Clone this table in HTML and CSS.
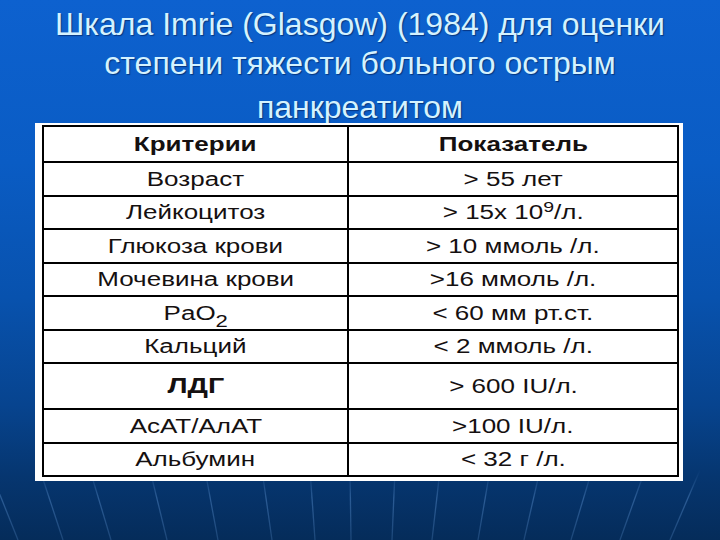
FILE: index.html
```html
<!DOCTYPE html>
<html lang="ru">
<head>
<meta charset="utf-8">
<title>Шкала Imrie</title>
<link rel="stylesheet" href="styles.css">
</head>
<body>
<div class="slide">
  <svg class="rays" width="720" height="540" viewBox="0 0 720 540" aria-hidden="true">
    <defs>
      <linearGradient id="rayfade" x1="0" y1="470" x2="0" y2="540" gradientUnits="userSpaceOnUse">
        <stop offset="0" stop-color="#6fa6e6" stop-opacity="0"/>
        <stop offset="0.4" stop-color="#6fa6e6" stop-opacity="0.35"/>
        <stop offset="1" stop-color="#6fa6e6" stop-opacity="0.22"/>
      </linearGradient>
    </defs>
    <g stroke="url(#rayfade)" stroke-width="1.3" fill="none">
      <line x1="-10" y1="470" x2="18" y2="540"/>
      <line x1="40" y1="470" x2="63" y2="540"/>
      <line x1="90" y1="470" x2="111" y2="540"/>
      <line x1="150" y1="470" x2="167" y2="540"/>
      <line x1="205" y1="470" x2="218" y2="540"/>
      <line x1="262" y1="470" x2="272" y2="540"/>
      <line x1="310" y1="470" x2="315" y2="540"/>
      <line x1="350" y1="470" x2="351" y2="540"/>
      <line x1="395" y1="470" x2="392" y2="540"/>
      <line x1="440" y1="470" x2="432" y2="540"/>
      <line x1="490" y1="470" x2="478" y2="540"/>
      <line x1="540" y1="470" x2="524" y2="540"/>
      <line x1="592" y1="470" x2="571" y2="540"/>
      <line x1="645" y1="470" x2="620" y2="540"/>
      <line x1="700" y1="470" x2="670" y2="540"/>
    </g>
  </svg>
  <h1 class="title">
    <span class="tline">Шкала Imrie (Glasgow) (1984) для оценки</span>
    <span class="tline">степени тяжести больного острым</span>
    <span class="tline last">панкреатитом</span>
  </h1>
  <div class="frame">
    <table class="grid">
      <colgroup>
        <col class="c1">
        <col class="c2">
      </colgroup>
      <tr class="head"><th><span class="cell">Критерии</span></th><th><span class="cell">Показатель</span></th></tr>
      <tr><td><span class="cell">Возраст</span></td><td><span class="cell">&gt; 55 лет</span></td></tr>
      <tr><td><span class="cell">Лейкоцитоз</span></td><td><span class="cell">&gt; 15х 10<sup>9</sup>/л.</span></td></tr>
      <tr><td><span class="cell">Глюкоза крови</span></td><td><span class="cell">&gt; 10 ммоль /л.</span></td></tr>
      <tr><td><span class="cell">Мочевина крови</span></td><td><span class="cell">&gt;16 ммоль /л.</span></td></tr>
      <tr><td><span class="cell">PaO<sub>2</sub></span></td><td><span class="cell">&lt; 60 мм рт.ст.</span></td></tr>
      <tr><td><span class="cell">Кальций</span></td><td><span class="cell">&lt; 2 ммоль /л.</span></td></tr>
      <tr class="tall"><td><span class="cell strong">ЛДГ</span></td><td><span class="cell">&gt; 600 IU/л.</span></td></tr>
      <tr><td><span class="cell">АсАТ/АлАТ</span></td><td><span class="cell">&gt;100 IU/л.</span></td></tr>
      <tr><td><span class="cell">Альбумин</span></td><td><span class="cell">&lt; 32 г /л.</span></td></tr>
    </table>
  </div>
</div>
</body>
</html>
```

FILE: styles.css
```css
html, body {
  margin: 0;
  padding: 0;
}
body {
  width: 720px;
  height: 540px;
  overflow: hidden;
  font-family: "Liberation Sans", Arial, sans-serif;
}
.slide {
  position: relative;
  width: 720px;
  height: 540px;
  overflow: hidden;
  background: linear-gradient(180deg, #0d61cf 0%, #0a5cc4 30%, #0852ae 55%, #07448f 75%, #063670 88%, #052c5a 100%);
}
.rays {
  position: absolute;
  left: 0;
  top: 0;
}
.title {
  position: relative;
  margin: 0;
  padding-top: 5px;
  font-weight: normal;
  font-size: 32px;
  line-height: 39px;
  color: #d4f2ff;
  text-align: center;
  text-shadow: 1px 1px 1px rgba(0, 20, 70, 0.55);
}
.tline {
  display: block;
}
.tline.last {
  margin-top: 5px;
}
.frame {
  position: relative;
  margin-top: -4px;
  margin-left: 35px;
  width: 648px;
  box-sizing: border-box;
  background: #ffffff;
  padding: 2px 6px 4px 7px;
}
.grid {
  width: 635px;
  border-collapse: collapse;
  table-layout: fixed;
  border: 2px solid #000;
  color: #151010;
  font-size: 20px;
}
.c1 { width: 305px; }
.c2 { width: 330px; }
.grid th,
.grid td {
  border: 2px solid #000;
  text-align: center;
  padding: 0;
  height: 31.5px;
  line-height: 22px;
  vertical-align: middle;
}
.grid th {
  font-weight: bold;
  height: 34px;
}
.grid tr.tall td {
  height: 44px;
}
.cell {
  display: inline-block;
  transform: scaleX(1.3);
  transform-origin: center;
  white-space: nowrap;
}
.cell.strong {
  font-weight: bold;
  font-size: 22px;
}
.grid sup {
  font-size: 15px;
  line-height: 0;
  vertical-align: 7px;
}
.grid sub {
  font-size: 17px;
  line-height: 0;
  vertical-align: -7px;
}
```
